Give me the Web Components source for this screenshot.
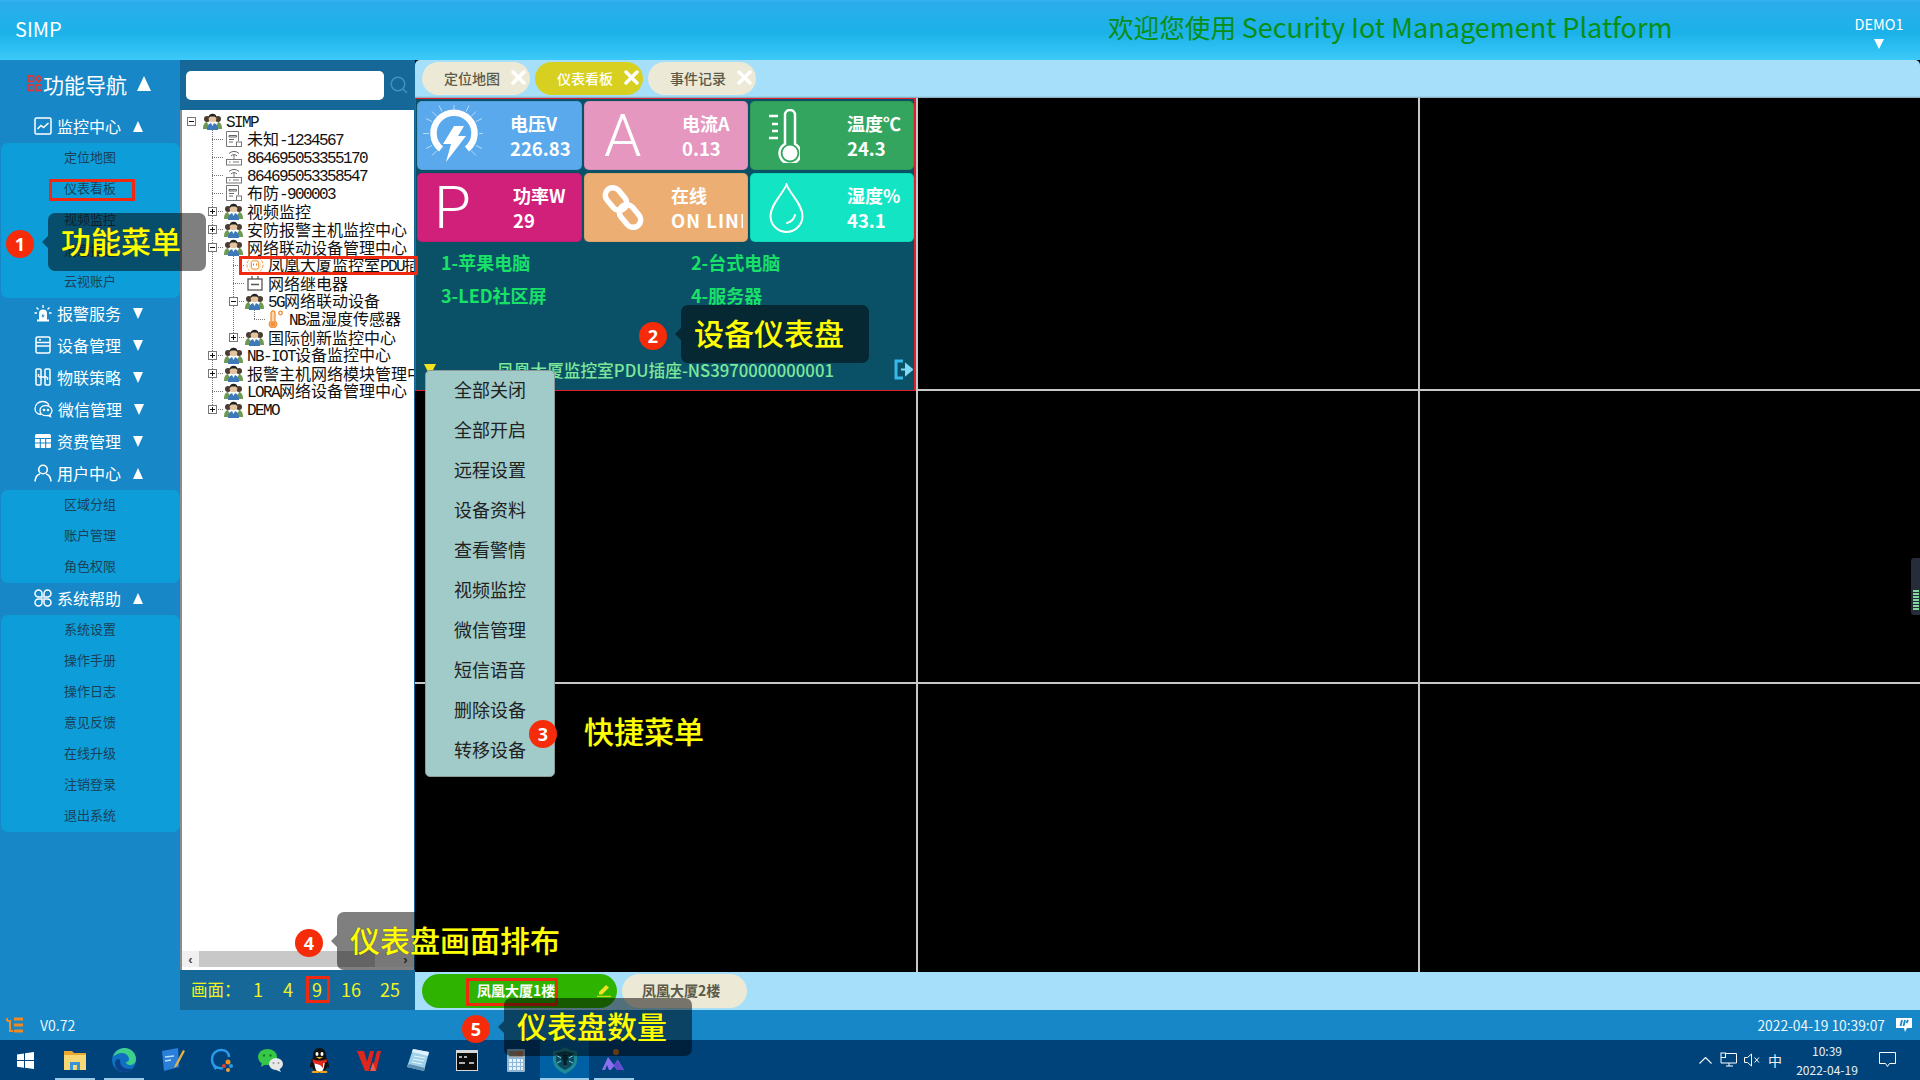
<!DOCTYPE html>
<html lang="zh">
<head>
<meta charset="utf-8">
<title>SIMP</title>
<style>
  html, body { margin: 0; padding: 0; width: 1920px; height: 1080px; overflow: hidden; background: #000; }
  body { font-family: "Noto Sans CJK SC", sans-serif; position: relative; }
  .page { display: flex; flex-direction: column; width: 1920px; height: 1080px; }
  .middle { display: flex; height: 950px; }
  .centre { display: flex; flex-direction: column; width: 1505px; }
  svg { display: block; }
</style>
</head>
<body>
<div class="page">
  <simp-header user="DEMO1">SIMP</simp-header>
  <div class="middle">
    <side-nav>
      <nav-group label="监控中心" icon="monitor" open>
        <nav-item>定位地图</nav-item><nav-item>仪表看板</nav-item><nav-item>视频监控</nav-item><nav-item>消息推送</nav-item><nav-item>云视账户</nav-item>
      </nav-group>
      <nav-group label="报警服务" icon="alarm"></nav-group>
      <nav-group label="设备管理" icon="device"></nav-group>
      <nav-group label="物联策略" icon="policy"></nav-group>
      <nav-group label="微信管理" icon="wechat"></nav-group>
      <nav-group label="资费管理" icon="table"></nav-group>
      <nav-group label="用户中心" icon="user" open>
        <nav-item>区域分组</nav-item><nav-item>账户管理</nav-item><nav-item>角色权限</nav-item>
      </nav-group>
      <nav-group label="系统帮助" icon="clover" open>
        <nav-item>系统设置</nav-item><nav-item>操作手册</nav-item><nav-item>操作日志</nav-item><nav-item>意见反馈</nav-item><nav-item>在线升级</nav-item><nav-item>注销登录</nav-item><nav-item>退出系统</nav-item>
      </nav-group>
    </side-nav>
    <tree-panel>
      <tree-node level="0" exp="-" icon="group"><i>SIMP</i></tree-node>
      <tree-node level="1" more icon="server">未知<i>-1234567</i></tree-node>
      <tree-node level="1" more icon="router"><i>864695053355170</i></tree-node>
      <tree-node level="1" more icon="router"><i>864695053358547</i></tree-node>
      <tree-node level="1" more icon="server">布防<i>-900003</i></tree-node>
      <tree-node level="1" more exp="+" icon="group">视频监控</tree-node>
      <tree-node level="1" more exp="+" icon="group">安防报警主机监控中心</tree-node>
      <tree-node level="1" more exp="-" icon="group">网络联动设备管理中心</tree-node>
      <tree-node level="2" more guides="1" icon="plug">凤凰大厦监控室<i>PDU</i>插座</tree-node>
      <tree-node level="2" more guides="1" icon="relay">网络继电器</tree-node>
      <tree-node level="2" more guides="1" exp="-" icon="group"><i>5G</i>网络联动设备</tree-node>
      <tree-node level="3" guides="1 2" icon="thermo"><i>NB</i>温湿度传感器</tree-node>
      <tree-node level="2" guides="1" exp="+" icon="group">国际创新监控中心</tree-node>
      <tree-node level="1" more exp="+" icon="group"><i>NB-IOT</i>设备监控中心</tree-node>
      <tree-node level="1" more exp="+" icon="group">报警主机网络模块管理中心</tree-node>
      <tree-node level="1" more icon="group"><i>LORA</i>网络设备管理中心</tree-node>
      <tree-node level="1" exp="+" icon="group"><i>DEMO</i></tree-node>
    </tree-panel>
    <div class="centre">
      <tab-bar>
        <tab-pill>定位地图</tab-pill>
        <tab-pill active>仪表看板</tab-pill>
        <tab-pill>事件记录</tab-pill>
      </tab-bar>
      <view-grid>
        <device-panel></device-panel>
      </view-grid>
      <board-bar></board-bar>
    </div>
  </div>
  <status-bar version="V0.72" time="2022-04-19 10:39:07"></status-bar>
  <task-bar></task-bar>
</div>

<context-menu style="left:425px;top:370px"></context-menu>
<screen-handle></screen-handle>

<red-box style="left:49px;top:179px;width:86px;height:22px"></red-box>
<red-box style="left:239px;top:256px;width:179px;height:19px"></red-box>
<red-box style="left:306px;top:976px;width:24px;height:27px"></red-box>
<red-box style="left:466px;top:978px;width:92px;height:28px"></red-box>

<call-out n="1" style="left:6px;top:213px">功能菜单</call-out>
<call-out n="2" style="left:639px;top:305px">设备仪表盘</call-out>
<call-out n="3" style="left:529px;top:703px">快捷菜单</call-out>
<call-out n="4" style="left:295px;top:912px">仪表盘画面排布</call-out>
<call-out n="5" style="left:462px;top:998px">仪表盘数量</call-out>

<script>
/* icon strings, shadow roots can't share <use> so they get pasted in */
const ICONS = {
  nav: `<svg width="15" height="17" viewBox="0 0 15 17" fill="none" stroke="#f0302a" stroke-width="1.6"><rect x="1" y="1" width="5.5" height="5.5"/><rect x="1" y="10" width="5.5" height="5.5"/><rect x="9" y="10" width="5.5" height="5.5"/><path d="M11.7 .8l3 3-3 3-3-3z"/></svg>`,
  monitor: `<svg width="18" height="18" viewBox="0 0 18 18" fill="none" stroke="#fff" stroke-width="1.5"><rect x="1" y="1" width="16" height="16" rx="1.5"/><path d="M3.5 12l3.5-3.5 2.5 2 5-4.5"/></svg>`,
  alarm: `<svg width="18" height="18" viewBox="0 0 18 18" fill="#fff"><path d="M5 16V9.5a4 4 0 0 1 8 0V16z"/><rect x="3" y="15.5" width="12" height="2"/><path d="M9.4 9l-2 3.4h1.5l-.5 2.2 2.2-3.3H9z" fill="#1787c8"/><path d="M9 1v3M2.5 3.5l2 2M15.5 3.5l-2 2M.5 9H3M15 9h2.5" stroke="#fff" stroke-width="1.3"/></svg>`,
  device: `<svg width="18" height="18" viewBox="0 0 18 18" fill="none" stroke="#fff" stroke-width="1.5"><rect x="2" y="1" width="14" height="16" rx="1.5"/><path d="M2 6.5h14M2 10h14M5 3.8h2"/></svg>`,
  policy: `<svg width="18" height="18" viewBox="0 0 18 18" fill="none" stroke="#fff" stroke-width="1.5"><rect x="2" y="1" width="5" height="16" rx="1"/><rect x="11" y="1" width="5" height="16" rx="1"/><path d="M4.5 6v3M13.5 9v3M5 9h8"/></svg>`,
  wechat: `<svg width="19" height="18" viewBox="0 0 19 18" fill="none" stroke="#fff" stroke-width="1.3"><path d="M7 14.5C3 14 1 11.5 1 8.5 1 4.5 4.5 1.5 8.5 1.5c3 0 5.5 1.5 6.5 4"/><path d="M11.5 5.5c3.5 0 6.500 2.300 6.500 5.200 0 1.600-.8 2.900-2 3.800l.5 2-2.500-1.200c-.8.200-1.600.300-2.500.300-3.300 0-5.500-2.200-5.500-5s2.200-5.100 5.500-5.100z"/><circle cx="10" cy="10" r=".7" fill="#fff"/><circle cx="14" cy="10" r=".7" fill="#fff"/></svg>`,
  table: `<svg width="18" height="18" viewBox="0 0 18 18"><rect x="1" y="2" width="16" height="14" rx="1.5" fill="#fff"/><path d="M1 6.5h16M1 11h16M6.3 6.5V16M11.7 6.5V16" stroke="#1787c8" stroke-width="1.1"/></svg>`,
  user: `<svg width="18" height="18" viewBox="0 0 18 18" fill="none" stroke="#fff" stroke-width="1.6"><circle cx="9" cy="5.5" r="4.3"/><path d="M1 17.5c.3-4.500 3-7 5-7.500M17 17.500c-.3-4.500-3-7-5-7.500"/></svg>`,
  clover: `<svg width="18" height="18" viewBox="0 0 18 18" fill="none" stroke="#fff" stroke-width="1.5"><path d="M8 8H4.500A3.500 3.500 0 1 1 8 4.500zM10 8V4.500A3.500 3.500 0 1 1 13.500 8zM8 10v3.500A3.500 3.500 0 1 1 4.500 10zM10 10h3.500a3.500 3.500 0 1 1-3.500 3.500z"/></svg>`,

  group: `<svg width="19" height="18" viewBox="0 0 19 18"><path d="M0 17c0-5 2-7 4-7l3 7z" fill="#6f9a52"/><path d="M19 17c0-5-2-7-4-7l-3 7z" fill="#6f9a52"/><circle cx="4" cy="7" r="3" fill="#4a3c30"/><circle cx="15" cy="7" r="3" fill="#4a3c30"/><path d="M4 18c0-5 2-7 5.500-7s5.500 2 5.500 7z" fill="#3d78b8"/><path d="M8 11l1.500 3 1.500-3z" fill="#fff"/><circle cx="9.500" cy="6.500" r="3.800" fill="#e3c3a0"/><path d="M5.500 6c-.5-5 8.500-6 8 0l-2-1.500H7.500z" fill="#222"/></svg>`,
  server: `<svg width="16" height="17" viewBox="0 0 16 17" fill="none" stroke="#777"><path d="M10 15.500H.5V.5h12V10"/><path d="M3 4.500h7.500V6H3zM3 8.500h5M3 11h4" stroke="#666"/><rect x="10.500" y="11" width="5" height="4.500" fill="#fff"/></svg>`,
  router: `<svg width="16" height="17" viewBox="0 0 16 17" fill="none" stroke="#777"><rect x=".5" y="10.500" width="15" height="5.500"/><path d="M3 13h1.500M7 13h6M8 10.500V5.500"/><path d="M5 7a4 4 0 0 1 6 0M3 4.500a7 7 0 0 1 10 0" stroke="#666"/></svg>`,
  plug: `<svg width="18" height="18" viewBox="0 0 18 18" fill="none"><circle cx="9" cy="9" r="8" stroke="#f29a3e" stroke-dasharray="3 1.500"/><circle cx="9" cy="9" r="6" fill="#fbe3c4"/><rect x="5.500" y="5" width="7" height="8" rx="1.500" stroke="#e8a050" fill="#fff"/><path d="M7.500 7.500v2M10.500 7.500v2" stroke="#e08030"/></svg>`,
  relay: `<svg width="16" height="16" viewBox="0 0 16 16" fill="none" stroke="#555" stroke-width="1.3"><rect x="1" y="4" width="14" height="11"/><path d="M5 4V1M11 4V1M4 9.500h8"/></svg>`,
  thermo: `<svg width="16" height="18" viewBox="0 0 16 18" fill="none" stroke="#f0903a" stroke-width="1.3"><path d="M3 11V3a2 2 0 0 1 4 0v8a3.700 3.700 0 1 1-4 0z" fill="#fbd8b0"/><circle cx="5" cy="14" r="2" fill="#f0903a"/><circle cx="12.500" cy="3" r="1.800"/></svg>`,

  gauge: `<svg width="62" height="62" viewBox="0 0 62 62" fill="none"><g stroke="#d8ecfb" stroke-width="1" opacity=".75" transform="translate(2 -2.500)"><path d="M31 0v7M0 31h6M62 31h-6M9 9l5 5M53 9l-5 5M9 53l5-5M53 53l-5-5M16 3l3 6M46 3l-3 6M3 16l6 3M59 16l-6 3M3 46l6-3M59 46l-6-3"/></g><path d="M20 44A20.500 20.500 0 1 1 46 44" stroke="#fff" stroke-width="6.500"/><path d="M33 21h10l-6 10h8L25 57l5-18h-8z" fill="#fff"/></svg>`,
  thermometer: `<svg width="31" height="54" viewBox="0 0 31 54" fill="none"><path d="M0 7h9M3 15h6M3 22h6M0 29h9" stroke="#fff" stroke-width="2.500"/><path d="M16 35V6a5 5 0 0 1 10 0v29a10.500 10.500 0 1 1-10 0z" stroke="#fff" stroke-width="2.500"/><circle cx="21" cy="44" r="7.500" fill="#fff"/></svg>`,
  chain: `<svg width="42" height="45" viewBox="0 0 42 45" fill="none" stroke="#fff" stroke-width="5.500"><rect x="1.500" y="6.500" width="25" height="15" rx="7.500" transform="rotate(50 14 14)"/><rect x="15.500" y="23.500" width="25" height="15" rx="7.500" transform="rotate(50 28 31)"/></svg>`,
  drop: `<svg width="35" height="50" viewBox="0 0 35 50" fill="none" stroke="#fff" stroke-width="2"><path d="M17.500 1.500C14 11 1.500 21 1.500 33a16 16 0 0 0 32 0C33.500 21 21 11 17.500 1.500z"/><path d="M26 32c-1 4-4 7-8 8" stroke-width="2" stroke-linecap="round"/></svg>`,
  exit: `<svg width="19" height="21" viewBox="0 0 19 21" fill="none"><path d="M9 2H2v17h7" stroke="#36b8e8" stroke-width="3"/><path d="M7 10.500h6M12 5.500l6 5-6 5z" stroke="#7fd9f5" stroke-width="2" fill="#7fd9f5"/></svg>`,

  win: `<svg width="17" height="17" viewBox="0 0 17 17" fill="#fff"><path d="M0 2.400l7-1v6.600H0zM8 1.200l9-1.200v8H8zM0 9h7v6.700l-7-1zM8 9h9v8l-9-1.200z"/></svg>`,
  folder: `<svg width="22" height="21" viewBox="0 0 22 21"><path d="M0 1h8l2 2h12v17H0z" fill="#e8a92c"/><rect y="5" width="22" height="15" fill="#f8d775"/><rect x="6" y="12" width="10" height="8" fill="#3a93d8"/><rect x="9" y="15" width="4" height="5" fill="#f8d775"/></svg>`,
  edge: `<svg width="24" height="24" viewBox="0 0 24 24"><circle cx="12" cy="12" r="12" fill="#0f6fc0"/><path d="M1 9C3 2 9 0 13 0c6 0 11 5 11 11 0 4-3 6-6 6-2 0-4-1-4-3 2 0 3-1 3-3 0-3-3-6-7-6S3 7 1 9z" fill="#3dd08a"/><path d="M8 13c0 5 4 8 9 8 1 0 2 0 3-1-2 3-5 4-8 4-5 0-9-4-9-9 0-2 2-4 4-4 .5 0 1 1 1 2z" fill="#0a3f8a"/></svg>`,
  note: `<svg width="24" height="24" viewBox="0 0 24 24"><path d="M1 3l16-3 1 19-15 4z" fill="#2a7fd8"/><path d="M4 9l9-1M4 13l6-1" stroke="#bcdcf8" stroke-width="1.500"/><path d="M22 2l2 1-8 15-3 2 1-3z" fill="#f0b040"/></svg>`,
  ring: `<svg width="24" height="24" viewBox="0 0 24 24" fill="none"><path d="M13 20c-6 1-11-2-11-9 0-5 4-9 9-9 5 0 8 3 8 7" stroke="#2a9ae8" stroke-width="2.500"/><path d="M3 18l2 4 4-3z" fill="#2a9ae8"/><circle cx="18" cy="14" r="2.500" fill="#f09020"/><circle cx="14" cy="18" r="2" fill="#e04030"/><circle cx="21" cy="18" r="2" fill="#2a9ae8"/><circle cx="18" cy="22" r="2" fill="#f0a030"/></svg>`,
  wx: `<svg width="25" height="23" viewBox="0 0 25 23"><ellipse cx="9.500" cy="8" rx="9.500" ry="8" fill="#36c948"/><path d="M4 13l-1 5 5-3z" fill="#36c948"/><circle cx="6" cy="6.500" r="1.200" fill="#167a28"/><circle cx="12.500" cy="6.500" r="1.200" fill="#167a28"/><ellipse cx="18" cy="15" rx="7" ry="6" fill="#e8e8e8"/><path d="M21 19l2 4-5-2z" fill="#e8e8e8"/><circle cx="15.500" cy="14" r="1" fill="#999"/><circle cx="20.500" cy="14" r="1" fill="#999"/></svg>`,
  qq: `<svg width="21" height="25" viewBox="0 0 21 25"><path d="M10.500 0C5.500 0 4 4 4 8c0 2-3 7-3 10 0 2 1 2 2 1 1 3 4 5 7.500 5s6.500-2 7.500-5c1 1 2 1 2-1 0-3-3-8-3-10 0-4-1.500-8-6.500-8z" fill="#111"/><path d="M5 13c1 8 2 11 5.500 11S15 21 16 13z" fill="#fff"/><path d="M3.500 11c4 2 10 2 14 0l.5 3-4 1.500V20l-3-3-7-2z" fill="#e0281e"/><ellipse cx="8" cy="6" rx="1.500" ry="2" fill="#fff"/><ellipse cx="13" cy="6" rx="1.500" ry="2" fill="#fff"/><path d="M7 9h7l-3.500 2z" fill="#f0b020"/><ellipse cx="6.500" cy="24" rx="4" ry="1.300" fill="#f0a020"/><ellipse cx="14.500" cy="24" rx="4" ry="1.300" fill="#f0a020"/></svg>`,
  wps: `<svg width="24" height="21" viewBox="0 0 24 21"><path d="M0 1h7l3 11 3-11h4l-5 20H8zM15 21l5-20h4l-5 20z" fill="#e0251c"/><path d="M13 21l3-9 3 9z" fill="#f05a4a"/></svg>`,
  pad: `<svg width="24" height="24" viewBox="0 0 24 24"><path d="M7 1l16 3-5 19L1 19z" fill="#9fd0ea"/><path d="M7 1l16 3-1 4L6 4z" fill="#dff1fa"/><path d="M1 19l17 4 1-3L3 16z" fill="#5a8fb0"/><path d="M8 8l11 2M7 11l11 2M6 14l10 2" stroke="#e8f6fc"/></svg>`,
  calc: `<svg width="18" height="23" viewBox="0 0 18 23"><rect width="18" height="23" rx="1" fill="#8fb6d4"/><rect x="2" y="2" width="14" height="6" fill="#9c8f80"/><rect x="11" y="3" width="4" height="3" fill="#d86a3a"/><g fill="#e8f2fa"><rect x="2" y="10" width="3" height="3"/><rect x="6" y="10" width="3" height="3"/><rect x="10" y="10" width="3" height="3"/><rect x="14" y="10" width="2" height="3"/><rect x="2" y="14" width="3" height="3"/><rect x="6" y="14" width="3" height="3"/><rect x="10" y="14" width="3" height="3"/><rect x="14" y="14" width="2" height="3"/><rect x="2" y="18" width="3" height="3"/><rect x="6" y="18" width="3" height="3"/><rect x="10" y="18" width="3" height="3"/><rect x="14" y="18" width="2" height="3"/></g></svg>`,
  shield: `<svg width="24" height="27" viewBox="0 0 24 27"><path d="M12 0l5 3 7 1v9c0 7-6 11-12 14C6 24 0 20 0 13V4l7-1z" fill="#1f8a98"/><path d="M12 4l9 2v7c0 5-5 8-9 10-4-2-9-5-9-10V6z" fill="#0d4a5e"/><circle cx="12" cy="11" r="3" fill="#0a1e28"/><path d="M11 12h2l1 6h-4z" fill="#0a1e28"/><path d="M3 8l5 3M21 8l-5 3M4 16l4-2M20 16l-4-2" stroke="#6fd8e0"/></svg>`,
  peak: `<svg width="24" height="24" viewBox="0 0 24 24"><circle cx="14" cy="4" r="3" fill="#c8781e"/><path d="M0 22L6 9l6 8 4-5 6 10h-7l-3-4-3 4H7L5 17l-2 5z" fill="#8a70f0"/><path d="M15 12l7 10h-7l-3-5z" fill="#5f4ad0"/></svg>`,
  tray: `<svg width="18" height="16" viewBox="0 0 18 16" fill="none" stroke="#f08a24" stroke-width="2"><path d="M1 4h3v10h3M1 1v3"/><path d="M8 2h9M8 8h9M8 14h9" stroke-width="3"/></svg>`,
  chat: `<svg width="16" height="14" viewBox="0 0 16 14"><path d="M0 0h16v10h-5l-2 4-1-4H0z" fill="#fff"/><path d="M6 2L4.500 8M9 2L7.500 8M12 2l-1.500 3" stroke="#1787c8" stroke-width="1.800"/></svg>`,
  network: `<svg width="17" height="16" viewBox="0 0 17 16" fill="none" stroke="#fff"><path d="M5.500 1.500h11V11H1V6"/><path d="M6 14h7M9 11v3"/><rect x="1" y="1" width="4.500" height="4.500"/></svg>`,
  sound: `<svg width="16" height="14" viewBox="0 0 16 14" fill="none" stroke="#fff"><path d="M.5 4.500h3L7.500 1v12L3.500 9.500h-3zM10.500 4.500l4.500 5M15 4.500l-4.500 5"/></svg>`,
  bell: `<svg width="17" height="16" viewBox="0 0 17 16" fill="none" stroke="#fff"><path d="M.5.500h16v11h-6l-2 3-2-3h-6z"/></svg>`,
  caret: `<svg width="13" height="7" viewBox="0 0 13 7" fill="none" stroke="#fff" stroke-width="1.100"><path d="M.5 6.500l6-6 6 6"/></svg>`
};

const triangle = (up, size, color) =>
  `<span style="display:block;width:0;height:0;border-left:${size / 2}px solid transparent;border-right:${size / 2}px solid transparent;border-${up ? 'bottom' : 'top'}:${size}px solid ${color}"></span>`;

class ShadowEl extends HTMLElement {
  constructor() {
    super();
    this.attachShadow({ mode: 'open' });
  }
  connectedCallback() {
    this.shadowRoot.innerHTML = this.render();
  }
}

class SimpHeader extends ShadowEl {
  render() {
    return `<style>
      :host { display: flex; align-items: center; height: 60px; box-sizing: border-box; padding: 0 15px 7px;
        color: #fff; background: linear-gradient(#3ab4f2 0, #2badec 4%, #1bb2e9 55%, #3ccaf9 100%); }
      .logo { font-size: 20px; width: 1093px; margin-top: 3px; }
      .title { font-size: 25.6px; color: #0a8f14; white-space: nowrap; }
      .title span { font-size: 27px; }
      .user { margin-left: auto; width: 52px; display: flex; flex-direction: column; align-items: center; gap: 5px; font-size: 14.5px; line-height: 20px; padding-top: 10px; }
    </style>
    <div class="logo"><slot></slot></div>
    <div class="title">欢迎您使用 <span>Security Iot Management Platform</span></div>
    <div class="user">${this.getAttribute('user')}${triangle(false, 10, '#fff')}</div>`;
  }
}

class SideNav extends ShadowEl {
  render() {
    return `<style>
      :host { display: block; width: 180px; background: #1787c8; color: #fff; flex: none; }
      .head { display: flex; align-items: center; height: 51px; padding: 0 0 4px 27px; box-sizing: border-box; font-size: 21px; }
      .head span.t { margin-left: 1px; width: 94px; white-space: nowrap; }
    </style>
    <div class="head">${ICONS.nav}<span class="t">功能导航</span>${triangle(true, 15, '#fff')}</div>
    <slot></slot>`;
  }
}

class NavGroup extends ShadowEl {
  render() {
    const open = this.hasAttribute('open');
    return `<style>
      :host { display: block; }
      .row { display: flex; align-items: center; height: 32px; box-sizing: border-box; padding: 0 0 2px 34px; font-size: 16px; color: #fff; }
      .t { margin-left: 5px; width: 76px; white-space: nowrap; }
      .sub { background: #0d9dd8; border-radius: 7px; margin-left: 1px; }
    </style>
    <div class="row">${ICONS[this.getAttribute('icon')]}<span class="t">${this.getAttribute('label')}</span>${triangle(open, 11, '#fff')}</div>
    ${open ? '<div class="sub"><slot></slot></div>' : ''}`;
  }
}

class NavItem extends ShadowEl {
  render() {
    return `<style>
      :host { display: block; height: 31px; line-height: 28px; text-align: center; font-size: 13px; color: #1c4058; padding-right: 1px; }
    </style><slot></slot>`;
  }
}

class TreePanel extends ShadowEl {
  render() {
    return `<style>
      :host { display: flex; flex-direction: column; width: 235px; flex: none; background: #156898; }
      .search { display: flex; align-items: center; height: 50px; padding: 0 0 0 6px; box-sizing: border-box; }
      .box { width: 198px; height: 29px; background: #fff; border-radius: 5px; }
      .search svg { margin-left: 6px; }
      .tree { flex: 1; background: #fff; box-shadow: inset 2px 0 #8c8c8c; padding: 2px 0 0 1px; overflow: hidden; display: flex; flex-direction: column; margin-right: 1px; }
      .rows { flex: 1; overflow: hidden; }
      .scroll { display: flex; height: 16px; background: #f0f0f0; margin: 0 0 3px 1px; align-items: center; }
      .arr { width: 17px; display: grid; place-items: center; font: bold 13px "Liberation Sans"; color: #444; }
      .thumb { width: 176px; height: 16px; background: #c8c8c8; }
      .foot { display: flex; align-items: center; height: 40px; box-sizing: border-box; padding-bottom: 2px; color: #f2f21e; font-size: 18px; }
      .lab { margin-left: 11px; width: 54px; font-size: 16.5px; white-space: nowrap; }
    </style>
    <div class="search"><div class="box"></div>
      <svg width="18" height="18" viewBox="0 0 18 18" fill="none" stroke="#3f93bd" stroke-width="1.5"><circle cx="8" cy="8" r="6.8"/><path d="M13 13l4 4"/></svg>
    </div>
    <div class="tree">
      <div class="rows"><slot></slot></div>
      <div class="scroll">
        <div class="arr">&#8249;</div><div class="thumb"></div><div style="flex:1"></div><div class="arr">&#8250;</div>
      </div>
    </div>
    <div class="foot">
      <div class="lab">画面：</div>
      <span style="margin-left:8px">1</span>
      <span style="margin-left:20px">4</span>
      <span style="margin-left:19px">9</span>
      <span style="margin-left:19px">16</span>
      <span style="margin-left:19px">25</span>
    </div>`;
  }
}

class TreeNode extends ShadowEl {
  render() {
    const level = +this.getAttribute('level');
    const guides = (this.getAttribute('guides') || '').split(' ').filter(Boolean).map(Number);
    const exp = this.getAttribute('exp');
    const more = this.hasAttribute('more');
    let cells = '';
    for (let i = 0; i < level; i++) {
      cells += `<div class="cell${guides.includes(i) ? ' v' : ''}"></div>`;
    }
    const conn = level === 0 ? '' : (more ? 'v h' : 'half h');
    const box = exp ? `<div class="box${exp === '+' ? ' plus' : ''}"></div>` : '';
    return `<style>
      :host { display: block; }
      .row { display: flex; align-items: center; height: 18px; white-space: nowrap; font-size: 16px; line-height: 18px; color: #111; }
      .cell { width: 21px; height: 18px; flex: none; display: grid; place-items: center; --d: repeating-linear-gradient(#777 0 1px, transparent 1px 2px); --e: repeating-linear-gradient(90deg, #777 0 1px, transparent 1px 2px); }
      .v { background: var(--d) 10px 0 / 1px 100% no-repeat; }
      .half { background: var(--d) 10px 0 / 1px 50% no-repeat; }
      .v.h, .half.h { background: var(--d) 10px 0 / 1px 100% no-repeat, var(--e) 10px 9px / 11px 1px no-repeat; }
      .half.h { background-size: 1px 50%, 11px 1px; }
      .box { width: 9px; height: 9px; box-sizing: border-box; border: 1px solid #777; background: linear-gradient(#111, #111) center / 5px 1px no-repeat, #fff; }
      .plus { background: linear-gradient(#111, #111) center / 5px 1px no-repeat, linear-gradient(#111, #111) center / 1px 5px no-repeat, #fff; }
      .ico { width: 21px; height: 18px; flex: none; display: grid; place-items: center; }
      .txt { margin-left: 3px; }
      ::slotted(i) { font-style: normal; font-family: "Liberation Mono", monospace; letter-spacing: -1.6px; }
    </style>
    <div class="row">${cells}<div class="cell ${conn}">${box}</div><div class="ico">${ICONS[this.getAttribute('icon')]}</div><div class="txt"><slot></slot></div></div>`;
  }
}

class TabBar extends ShadowEl {
  render() {
    return `<style>
      :host { display: flex; gap: 5px; align-items: flex-start; height: 38px; box-sizing: border-box; padding: 2px 0 0 7px;
        background: linear-gradient(#a5dff9 0, #a5dff9 95%, #7f9fb0 100%); border-radius: 5px 5px 0 0; }
    </style><slot></slot>`;
  }
}

class TabPill extends ShadowEl {
  render() {
    const on = this.hasAttribute('active');
    return `<style>
      :host { display: flex; align-items: center; width: 108px; height: 33px; box-sizing: border-box; padding: 0 0 2px 22px; border-radius: 17px;
        background: ${on ? '#d8d020' : '#ece9d6'}; color: ${on ? '#fff' : '#5a5a4a'}; font-size: 14px; font-weight: 500; }
      svg { margin-left: 11px; }
    </style><slot></slot>
    <svg width="15" height="15" viewBox="0 0 15 15" stroke="#fff" stroke-width="3.5" stroke-linecap="round"><path d="M2 2l11 11M13 2L2 13"/></svg>`;
  }
}

class ViewGrid extends ShadowEl {
  render() {
    let blanks = '';
    for (let i = 0; i < 8; i++) blanks += '<div class="cell"></div>';
    return `<style>
      :host { display: grid; grid-template-columns: repeat(3, 1fr); grid-template-rows: 291px 291px 288px; gap: 2px; height: 874px; background: #c8c8c8; }
      .cell { background: #000; }
    </style><slot></slot>${blanks}`;
  }
}

class DevicePanel extends ShadowEl {
  render() {
    return `<style>
      :host { display: flex; flex-direction: column; box-sizing: border-box; background: #0a5066; border: 1px solid #e0202e; border-right-width: 2px; height: 293px; }
      .cards { display: grid; grid-template-columns: 165px 164px 164px; grid-auto-rows: 69px; gap: 3px 2px; padding: 2px 0 0 1px; }
      .list { display: grid; grid-template-columns: 250px 200px; grid-auto-rows: 33px; padding: 3px 0 0 25px; align-items: center; font-size: 18px; font-weight: 700; color: #18e068; }
      .foot { margin-top: auto; height: 36px; box-sizing: border-box; padding-bottom: 4px; display: flex; align-items: center; font-size: 16.7px; font-weight: 500; color: #7de89a; white-space: nowrap; }
      .big { font: 300 60px/60px Roboto, sans-serif; color: #fff; }
      .tri { margin: 0 61px 0 8px; }
      .exit { margin-left: auto; margin-right: 1px; margin-top: 4px; }
    </style>
    <div class="cards">
      <dash-card label="电压V" value="226.83" pad="93" il="4" color="#5aa9ec">${ICONS.gauge}</dash-card>
      <dash-card label="电流A" value="0.13" pad="98" il="20" color="#e597bf"><span class="big">A</span></dash-card>
      <dash-card label="温度℃" value="24.3" pad="97" il="19" color="#34a55e">${ICONS.thermometer}</dash-card>
      <dash-card label="功率W" value="29" pad="96" il="17" color="#d1207a"><span class="big">P</span></dash-card>
      <dash-card label="在线" value="ON LINE" spacing="1" pad="87" il="18" color="#ecae72">${ICONS.chain}</dash-card>
      <dash-card label="湿度%" value="43.1" pad="97" il="19" color="#12e4c4">${ICONS.drop}</dash-card>
    </div>
    <div class="list">
      <div>1-苹果电脑</div><div>2-台式电脑</div>
      <div>3-LED社区屏</div><div>4-服务器</div>
    </div>
    <div class="foot">
      <div class="tri">${triangle(false, 12, '#f2e31e')}</div>
      <div>凤凰大厦监控室PDU插座-NS3970000000001</div>
      <div class="exit">${ICONS.exit}</div>
    </div>`;
  }
}

class DashCard extends ShadowEl {
  render() {
    const pad = this.getAttribute('pad');
    return `<style>
      :host { display: grid; grid-template-columns: ${pad}px 1fr; align-items: center; border-radius: 5px; overflow: hidden;
        background: ${this.getAttribute('color')}; color: #fff; box-shadow: inset 0 0 0 1px rgba(0,0,0,.06); }
      .ic { margin-left: ${this.getAttribute('il')}px; display: flex; }
      .tx { font-size: 18px; font-weight: 700; line-height: 25px; white-space: nowrap; overflow: hidden; margin-right: 5px; }
      .val { font-size: 18.5px; letter-spacing: ${this.getAttribute('spacing') || 0}px; }
    </style>
    <div class="ic"><slot></slot></div>
    <div class="tx"><div>${this.getAttribute('label')}</div><div class="val">${this.getAttribute('value')}</div></div>`;
  }
}

class BoardBar extends ShadowEl {
  render() {
    return `<style>
      :host { display: flex; gap: 5px; height: 38px; box-sizing: border-box; padding: 2px 0 0 7px; align-items: flex-start; background: #a5dff9; font-size: 14px; font-weight: 700; }
      .pill { display: flex; align-items: center; height: 34px; border-radius: 17px; box-sizing: border-box; padding-bottom: 2px; }
      .on { width: 195px; background: #2db300; color: #fff; padding-left: 55px; }
      .on svg { margin-left: 42px; }
      .off { width: 125px; background: #ece9d6; color: #5a5a4a; padding-left: 20px; }
    </style>
    <div class="pill on">凤凰大厦1楼<svg width="14" height="14" viewBox="0 0 14 14"><path d="M2 9l7-7 3 2.5-7 7H2z" fill="#f2e31e"/><path d="M0 13.3h14" stroke="#f2e31e"/></svg></div>
    <div class="pill off">凤凰大厦2楼</div>`;
  }
}

class StatusBar extends ShadowEl {
  render() {
    return `<style>
      :host { display: flex; align-items: center; height: 30px; background: #1787c8; color: #eaf6fc; font-size: 14px; padding: 0 8px 0 6px; }
      .v { margin-left: 16px; }
      .t { margin-left: auto; margin-right: 11px; font-size: 13.8px; }
    </style>${ICONS.tray}<span class="v">${this.getAttribute('version')}</span>
    <span class="t">${this.getAttribute('time')}</span>${ICONS.chat}`;
  }
}

class TaskBar extends ShadowEl {
  render() {
    const apps = [['folder', 'run'], ['edge', 'run'], ['note'], ['ring'], ['wx'], ['qq'], ['wps'], ['pad'], ['cmd'], ['calc'], ['shield', 'focus'], ['peak', 'run']];
    const cmd = `<svg width="22" height="21" viewBox="0 0 22 21"><rect width="22" height="21" fill="#d8d8d8"/><rect x="1" y="3" width="20" height="17" fill="#0c0c0c"/><path d="M3 7h3M8 7h3M3 13h6M13 13h5" stroke="#e8e8e8" stroke-width="1.5"/></svg>`;
    const slots = apps.map(([n, s]) => `<div class="slot ${s || ''}">${n === 'cmd' ? cmd : ICONS[n]}</div>`).join('');
    return `<style>
      :host { display: flex; align-items: center; height: 40px; background: #00437a; color: #e8f0f6; }
      .start { width: 50px; display: grid; place-items: center; height: 40px; flex: none; }
      .slot { width: 49px; height: 40px; display: grid; place-items: center; position: relative; flex: none; }
      .run::after { content: ""; position: absolute; left: 5px; right: 4px; bottom: 0; height: 2px; background: #9ccbe8; }
      .focus { background: #0060a4; }
      .focus::after { content: ""; position: absolute; left: 0; right: 0; bottom: 0; height: 2px; background: #9ccbe8; }
      .tray { margin-left: auto; display: flex; align-items: center; height: 40px; padding-right: 13px; }
      .i { width: 23px; display: grid; place-items: center; font-size: 14px; }
      .clock { width: 80px; text-align: center; font-size: 12px; line-height: 19px; }
      .bell { width: 40px; display: grid; place-items: center; }
    </style>
    <div class="start">${ICONS.win}</div>${slots}
    <div class="tray">
      <div class="i">${ICONS.caret}</div><div class="i">${ICONS.network}</div><div class="i">${ICONS.sound}</div>
      <div class="i" style="width:24px">中</div>
      <div class="clock"><div>10:39</div><div>2022-04-19</div></div>
      <div class="bell">${ICONS.bell}</div>
    </div>`;
  }
}

class ContextMenu extends ShadowEl {
  render() {
    const items = ['全部关闭', '全部开启', '远程设置', '设备资料', '查看警情', '视频监控', '微信管理', '短信语音', '删除设备', '转移设备'];
    return `<style>
      :host { position: absolute; width: 130px; height: 407px; box-sizing: border-box; padding-left: 28px; background: #a0cbc9; border: 1px solid #8a9a9a; border-radius: 5px; color: #222; font-size: 18px; }
      div { height: 40px; line-height: 37px; }
    </style>${items.map(t => `<div>${t}</div>`).join('')}`;
  }
}

class ScreenHandle extends ShadowEl {
  render() {
    return `<style>
      :host { position: absolute; left: 1911px; top: 558px; width: 9px; height: 57px; background: #262c3a; border-radius: 3px 0 0 3px; display: flex; flex-direction: column; justify-content: flex-end; gap: 1px; padding: 0 1px 5px 2px; box-sizing: border-box; }
      i { display: block; height: 2px; background: #7fd8a0; }
    </style><i></i><i></i><i></i><i></i><i></i><i></i><i></i>`;
  }
}

class RedBox extends ShadowEl {
  render() {
    return `<style>
      :host { position: absolute; box-sizing: border-box; border: 3px solid #f02a10; pointer-events: none; }
    </style>`;
  }
}

class CallOut extends ShadowEl {
  render() {
    return `<style>
      :host { position: absolute; display: flex; align-items: center; gap: 14px; height: 58px; }
      .n { width: 28px; height: 28px; margin-top: 3px; border-radius: 50%; background: #f52b0a; color: #fff; font: 700 18px/28px "Open Sans", sans-serif; text-align: center; flex: none; }
      .b { position: relative; height: 58px; line-height: 54px; padding: 0 25px 0 13px; background: rgba(0,0,0,.5); border-radius: 7px; font-size: 30px; font-weight: 500; color: #ffff00; white-space: nowrap; text-shadow: 0 0 1px #333; }
      .b::before { content: ""; position: absolute; left: -6px; top: 23px; border: 6px solid transparent; border-left: 0; border-right-color: rgba(0,0,0,.5); }
    </style>
    <div class="n">${this.getAttribute('n')}</div>
    <div class="b"><slot></slot></div>`;
  }
}

customElements.define('simp-header', SimpHeader);
customElements.define('side-nav', SideNav);
customElements.define('nav-group', NavGroup);
customElements.define('nav-item', NavItem);
customElements.define('tree-panel', TreePanel);
customElements.define('tree-node', TreeNode);
customElements.define('tab-bar', TabBar);
customElements.define('tab-pill', TabPill);
customElements.define('view-grid', ViewGrid);
customElements.define('device-panel', DevicePanel);
customElements.define('dash-card', DashCard);
customElements.define('board-bar', BoardBar);
customElements.define('status-bar', StatusBar);
customElements.define('task-bar', TaskBar);
customElements.define('context-menu', ContextMenu);
customElements.define('screen-handle', ScreenHandle);
customElements.define('red-box', RedBox);
customElements.define('call-out', CallOut);
</script>
</body>
</html>
